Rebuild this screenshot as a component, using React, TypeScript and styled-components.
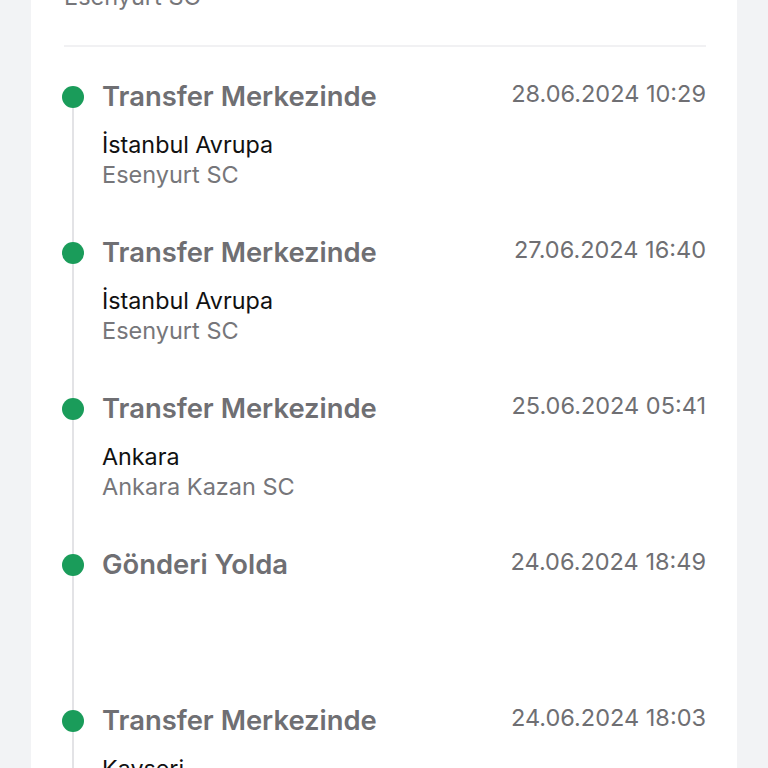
import React from "react";
import styled, { createGlobalStyle } from "styled-components";

const Global = createGlobalStyle`
  html, body { margin: 0; padding: 0; background: #f2f3f5; }
  body { font-family: Inter, "Noto Sans", sans-serif; -webkit-font-smoothing: antialiased; }
`;

const Page = styled.div`
  padding: 0 31px;
  height: 768px;
  overflow: hidden;
`;

const Card = styled.div`
  background: #ffffff;
  margin-top: -18px;
  padding: 0 31px 0 33px;
  min-height: 900px;
`;

const Summary = styled.div`
  padding-bottom: 33px;
  border-bottom: 2px solid #f1f1f3;
`;

const SummaryText = styled.div`
  font-size: 23.5px;
  line-height: 30px;
  color: #76767a;
`;

const List = styled.div`
  padding-top: 33px;
`;

const Item = styled.div`
  display: grid;
  grid-template-columns: 38px 1fr;
  height: 156px;
`;

const Rail = styled.div<{ $first?: boolean }>`
  position: relative;
  &::before {
    content: "";
    position: absolute;
    left: 8px;
    width: 2px;
    top: ${(p) => (p.$first ? "16px" : "0")};
    bottom: 0;
    background: #e3e3e6;
  }
`;

const Dot = styled.span`
  position: absolute;
  left: -2px;
  top: 6px;
  width: 22px;
  height: 22px;
  border-radius: 50%;
  background: #1a9c5a;
`;

const Content = styled.div`
  display: flex;
  flex-direction: column;
`;

const Header = styled.div`
  display: flex;
  justify-content: space-between;
  align-items: flex-start;
`;

const Title = styled.div`
  font-size: 27.4px;
  line-height: 32px;
  font-weight: 600;
  color: #6f6f73;
`;

const DateText = styled.div`
  font-size: 23.5px;
  line-height: 28px;
  color: #6f6f73;
`;

const Location = styled.div`
  margin-top: 18px;
  font-size: 23.3px;
  line-height: 30px;
  color: #111111;
`;

const Branch = styled.div`
  font-size: 23.5px;
  line-height: 30px;
  color: #76767a;
`;

type Ev = { title: string; date: string; city?: string; branch?: string };

const events: Ev[] = [
  { title: "Transfer Merkezinde", date: "28.06.2024 10:29", city: "İstanbul Avrupa", branch: "Esenyurt SC" },
  { title: "Transfer Merkezinde", date: "27.06.2024 16:40", city: "İstanbul Avrupa", branch: "Esenyurt SC" },
  { title: "Transfer Merkezinde", date: "25.06.2024 05:41", city: "Ankara", branch: "Ankara Kazan SC" },
  { title: "Gönderi Yolda", date: "24.06.2024 18:49" },
  { title: "Transfer Merkezinde", date: "24.06.2024 18:03", city: "Kayseri", branch: "Kayseri SC" },
];

export default function App() {
  return (
    <>
      <Global />
      <Page>
        <Card>
          <Summary>
            <SummaryText>Esenyurt SC</SummaryText>
          </Summary>
          <List>
            {events.map((e, i) => (
              <Item key={i}>
                <Rail $first={i === 0}>
                  <Dot />
                </Rail>
                <Content>
                  <Header>
                    <Title>{e.title}</Title>
                    <DateText>{e.date}</DateText>
                  </Header>
                  {e.city && <Location>{e.city}</Location>}
                  {e.branch && <Branch>{e.branch}</Branch>}
                </Content>
              </Item>
            ))}
          </List>
        </Card>
      </Page>
    </>
  );
}
